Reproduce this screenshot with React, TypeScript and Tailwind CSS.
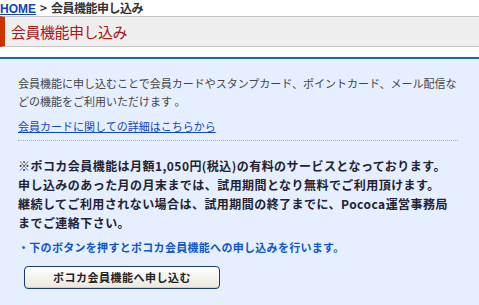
export default function App() {
  return (
    <div
      className="w-[479px] h-[305px] overflow-hidden bg-white text-[#333333]"
      style={{ fontFamily: '"Noto Sans CJK JP", "Liberation Sans", sans-serif' }}
    >
      {/* breadcrumb */}
      <div className="h-[16px] text-[12px] leading-[16px] font-bold text-[#333333] whitespace-nowrap">
        <a href="#" className="text-[#1144bb] underline" style={{ fontFamily: '"Liberation Sans", sans-serif' }}>
          HOME
        </a>
        <span className="mx-[4px]">&gt;</span>
        <span className="tracking-[-0.5px]">会員機能申し込み</span>
      </div>

      {/* title */}
      <div className="h-[31px] flex items-center border-y border-[#c4c4c4] border-l-[5px] border-l-[#cc3300] bg-[#eeeeee] pl-[6px]">
        <h1 className="text-[15px] leading-none text-[#b01414] tracking-[-0.5px]">会員機能申し込み</h1>
      </div>

      {/* body */}
      <div className="mt-[10px] h-[248px] border-t-2 border-[#1b5fd6] bg-[#e5efff] pl-[18px] pr-[21px] pt-[15px]">
        <p className="text-[11px] leading-[18px] text-[#444444] whitespace-nowrap">
          会員機能に申し込むことで会員カードやスタンプカード、ポイントカード、メール配信な
          <br />
          どの機能をご利用いただけます 。
        </p>
        <a href="#" className="block mt-[7px] text-[11px] leading-[18px] text-[#1144cc] underline">
          会員カードに関しての詳細はこちらから
        </a>
        <div className="mt-[5px] border-t border-dotted border-[#a8b0c0]" />

        <p className="mt-[15px] text-[12px] leading-[19px] font-bold text-[#222233] whitespace-nowrap tracking-[0.45px]">
          ※ポコカ会員機能は月額1,050円(税込)の有料のサービスとなっております。
          <br />
          申し込みのあった月の月末までは、試用期間となり無料でご利用頂けます。
          <br />
          継続してご利用されない場合は、試用期間の終了までに、Pococa運営事務局
          <br />
          までご連絡下さい。
        </p>

        <p className="mt-[6px] text-[11px] leading-[18px] font-bold text-[#1155cc] whitespace-nowrap tracking-[0.3px]">
          ・下のボタンを押すとポコカ会員機能への申し込みを行います。
        </p>

        <button
          type="button"
          className="mt-[10px] ml-[6px] w-[196px] h-[23px] rounded-[4px] border border-[#1d3a6e] bg-gradient-to-b from-white to-[#ece7dc] text-[11px] font-bold text-[#222222] shadow-[inset_0_-1px_0_#d6cfc0] tracking-[0.5px]"
        >
          ポコカ会員機能へ申し込む
        </button>
      </div>
    </div>
  );
}
